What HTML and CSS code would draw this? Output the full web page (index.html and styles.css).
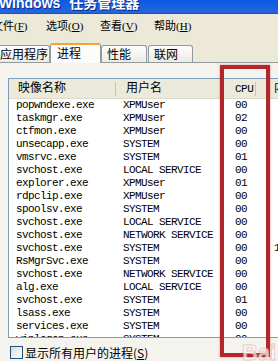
FILE: index.html
```html
<!doctype html>
<html>
  <head>
    <meta charset="utf-8">
    <title>Windows 任务管理器</title>
    <link rel="stylesheet" href="styles.css">
  </head>
  <body>
    <div class='window'>
      <div class='titlebar'>
        <div class='title'>Windows 任务管理器</div>
      </div>

      <nav class='menubar'>
        <span class='menu-item'>文件(<u>F</u>)</span>
        <span class='menu-item'>选项(<u>O</u>)</span>
        <span class='menu-item'>查看(<u>V</u>)</span>
        <span class='menu-item'>帮助(<u>H</u>)</span>
      </nav>

      <div class='tabs'>
        <div class='tab tab-first'>应用程序</div>
        <div class='tab tab-active'>进程</div>
        <div class='tab'>性能</div>
        <div class='tab tab-last'>联网</div>
      </div>

      <main class='panel'>
        <div class='list'>
          <div class='list-head'>
            <div class='col col-name'>映像名称</div>
            <div class='col col-user'>用户名</div>
            <div class='col col-cpu'>CPU</div>
            <div class='col col-mem'>内存使用</div>
          </div>

          <div class='row'><span class='col col-name'>popwndexe.exe</span><span class='col col-user'>XPMUser</span><span class='col col-cpu'>00</span><span class='col col-mem'></span></div>
          <div class='row'><span class='col col-name'>taskmgr.exe</span><span class='col col-user'>XPMUser</span><span class='col col-cpu'>02</span><span class='col col-mem'></span></div>
          <div class='row'><span class='col col-name'>ctfmon.exe</span><span class='col col-user'>XPMUser</span><span class='col col-cpu'>00</span><span class='col col-mem'></span></div>
          <div class='row'><span class='col col-name'>unsecapp.exe</span><span class='col col-user'>SYSTEM</span><span class='col col-cpu'>00</span><span class='col col-mem'></span></div>
          <div class='row'><span class='col col-name'>vmsrvc.exe</span><span class='col col-user'>SYSTEM</span><span class='col col-cpu'>01</span><span class='col col-mem'></span></div>
          <div class='row'><span class='col col-name'>svchost.exe</span><span class='col col-user'>LOCAL SERVICE</span><span class='col col-cpu'>00</span><span class='col col-mem'></span></div>
          <div class='row'><span class='col col-name'>explorer.exe</span><span class='col col-user'>XPMUser</span><span class='col col-cpu'>01</span><span class='col col-mem'></span></div>
          <div class='row'><span class='col col-name'>rdpclip.exe</span><span class='col col-user'>XPMUser</span><span class='col col-cpu'>00</span><span class='col col-mem'></span></div>
          <div class='row'><span class='col col-name'>spoolsv.exe</span><span class='col col-user'>SYSTEM</span><span class='col col-cpu'>00</span><span class='col col-mem'></span></div>
          <div class='row'><span class='col col-name'>svchost.exe</span><span class='col col-user'>LOCAL SERVICE</span><span class='col col-cpu'>00</span><span class='col col-mem'></span></div>
          <div class='row'><span class='col col-name'>svchost.exe</span><span class='col col-user'>NETWORK SERVICE</span><span class='col col-cpu'>00</span><span class='col col-mem'></span></div>
          <div class='row'><span class='col col-name'>svchost.exe</span><span class='col col-user'>SYSTEM</span><span class='col col-cpu'>00</span><span class='col col-mem'>19,216 K</span></div>
          <div class='row'><span class='col col-name'>RsMgrSvc.exe</span><span class='col col-user'>SYSTEM</span><span class='col col-cpu'>00</span><span class='col col-mem'></span></div>
          <div class='row'><span class='col col-name'>svchost.exe</span><span class='col col-user'>NETWORK SERVICE</span><span class='col col-cpu'>00</span><span class='col col-mem'></span></div>
          <div class='row'><span class='col col-name'>alg.exe</span><span class='col col-user'>LOCAL SERVICE</span><span class='col col-cpu'>00</span><span class='col col-mem'></span></div>
          <div class='row'><span class='col col-name'>svchost.exe</span><span class='col col-user'>SYSTEM</span><span class='col col-cpu'>01</span><span class='col col-mem'></span></div>
          <div class='row'><span class='col col-name'>lsass.exe</span><span class='col col-user'>SYSTEM</span><span class='col col-cpu'>00</span><span class='col col-mem'></span></div>
          <div class='row'><span class='col col-name'>services.exe</span><span class='col col-user'>SYSTEM</span><span class='col col-cpu'>00</span><span class='col col-mem'></span></div>
          <div class='row'><span class='col col-name'>winlogon.exe</span><span class='col col-user'>SYSTEM</span><span class='col col-cpu'>00</span><span class='col col-mem'></span></div>
        </div>

        <label class='show-all'>
          <span class='checkbox'></span>
          <span>显示所有用户的进程(<u>S</u>)</span>
        </label>
      </main>

      <!-- red marker drawn over the CPU column -->
      <div class='highlight'></div>
      <div class='watermark'>Bai</div>
    </div>
  </body>
</html>
```

FILE: styles.css
```css
:root {
  --window-color: #ece9d8;
  --panel-color: #f4f3ee;
  --tab-border: #919b9c;
  --list-border: #7f9db9;
  --marker-color: #b3262c;
  --cjk: "Noto Sans CJK SC";
}

body {
  margin: 0;
  background: var(--window-color);
}

.window {
  position: relative;
  width: 278px;
  height: 361px;
  overflow: hidden;
  background: var(--window-color);
}

.titlebar {
  height: 14px;
  overflow: hidden;
  background: linear-gradient(#0a5ae6, #2767d8);
  border-bottom: 1px solid #1d4fb8;
  box-sizing: border-box;
}

.title {
  margin-top: -4px;
  margin-left: -1px;
  font: bold 14px/14px "Liberation Sans", var(--cjk), sans-serif;
  word-spacing: 5px;
  color: #fff;
  text-shadow: 1px 1px #0b2a8a;
  white-space: nowrap;
}

.menubar {
  display: flex;
  height: 24px;
  margin-left: -8px;
  font: 11px/25px "Liberation Serif", var(--cjk), serif;
  color: #000;
  white-space: nowrap;
}

.menu-item {
  flex: none;
  width: 54px;
}

.tabs {
  display: flex;
  align-items: flex-end;
  height: 24px;
  margin-left: -7px;
  position: relative;
  z-index: 1;
}

.tab {
  flex: none;
  box-sizing: border-box;
  width: 46px;
  height: 17px;
  padding-left: 5px;
  border: 1px solid var(--tab-border);
  border-bottom: none;
  border-radius: 3px 3px 0 0;
  background: linear-gradient(#fefefe, #ecebe5);
  font: 12px/15px var(--cjk), sans-serif;
  color: #000;
}

.tab-first {
  width: 57px;
  padding-left: 6px;
}

.tab-last {
  width: 45px;
  margin-left: 1px;
}

.tab-active {
  width: 51px;
  height: 20px;
  margin-bottom: -1px;
  padding-left: 6px;
  border-top: 2px solid #f3a33c;
  background: #fcfcfa;
  line-height: 15px;
}

.panel {
  margin-left: -2px;
  padding: 15px 0 0 9px;
  height: 320px;
  border-top: 1px solid var(--tab-border);
  border-left: 1px solid var(--tab-border);
  background: var(--panel-color);
}

.list {
  box-sizing: border-box;
  width: 400px;
  height: 260px;
  overflow: hidden;
  border: 1px solid var(--list-border);
  background: #fff;
}

.list-head {
  display: flex;
  height: 20px;
  box-sizing: border-box;
  border-bottom: 1px solid #dcd9c9;
  background: #ebeadb;
  font: 12px/20px "Liberation Mono", var(--cjk), monospace;
  color: #000;
  white-space: nowrap;
}

.list-head .col {
  background: linear-gradient(#c7c5b2, #c7c5b2) no-repeat right 0 center / 1px 14px;
}

.list-head .col-cpu {
  font-size: 11px;
  letter-spacing: -0.5px;
}

.row {
  display: flex;
  height: 13px;
  font: 11px/13px "Liberation Mono", monospace;
  letter-spacing: -0.6px;
  color: #000;
  white-space: nowrap;
}

.col {
  flex: none;
  box-sizing: border-box;
  overflow: hidden;
}

.col-name {
  width: 107px;
  padding-left: 7px;
}

.col-user {
  width: 106px;
  padding-left: 7px;
}

.col-cpu {
  width: 34px;
  padding-left: 13px;
}

.col-mem {
  width: 100px;
  padding-left: 18px;
}

.list-head .col-name {
  padding-left: 9px;
}

.list-head .col-user {
  padding-left: 10px;
}

.show-all {
  display: flex;
  align-items: center;
  gap: 2px;
  margin: 8px 0 0 2px;
  font: 12px/13px var(--cjk), sans-serif;
  color: #000;
  white-space: nowrap;
}

.checkbox {
  flex: none;
  box-sizing: border-box;
  width: 13px;
  height: 13px;
  border: 1px solid #1c5180;
  background: linear-gradient(135deg, #dcdbd5, #fff);
}

.highlight {
  position: absolute;
  left: 220px;
  top: 65px;
  width: 50px;
  height: 292px;
  box-sizing: border-box;
  border: 4px solid var(--marker-color);
  box-shadow: 0 0 2px rgba(179, 38, 44, 0.5);
}

.watermark {
  position: absolute;
  left: 242px;
  top: 342px;
  font: bold 22px/22px "Liberation Sans", sans-serif;
  color: rgba(255, 255, 255, 0.7);
  -webkit-text-stroke: 1px rgba(214, 150, 152, 0.5);
}
```
